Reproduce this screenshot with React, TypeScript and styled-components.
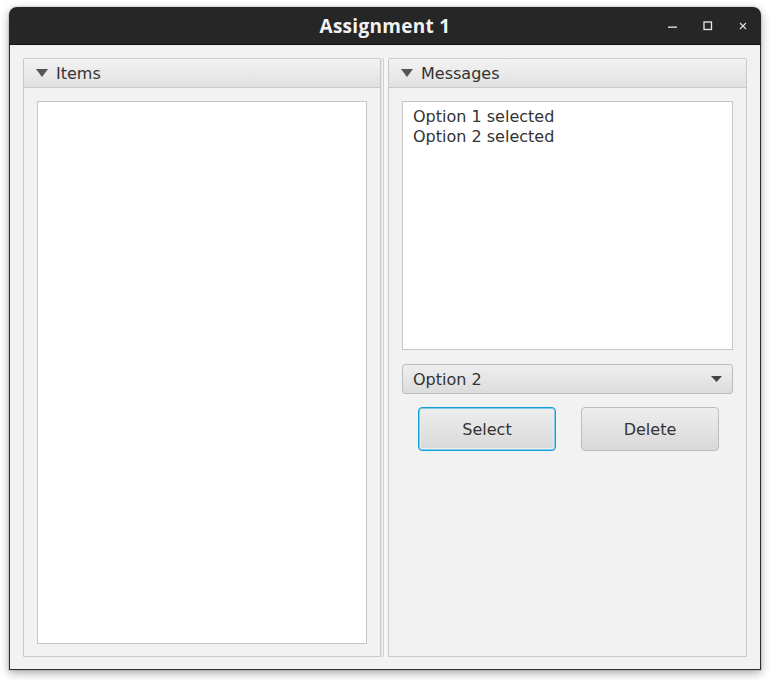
import React from "react";
import styled, { createGlobalStyle } from "styled-components";

const Global = createGlobalStyle`
  html, body { margin: 0; padding: 0; background: #ffffff; }
  body { font-family: "DejaVu Sans", "Liberation Sans", sans-serif; }
  * { box-sizing: border-box; }
`;

const Page = styled.div`
  width: 770px;
  height: 680px;
  padding: 7px 0 0 9px;
  overflow: hidden;
`;

const Window = styled.div`
  width: 752px;
  height: 663px;
  display: flex;
  flex-direction: column;
  border-radius: 8px 8px 0 0;
  box-shadow: 0 3px 10px rgba(0, 0, 0, 0.35), 0 0 0 1px rgba(0, 0, 0, 0.08);
`;

const TitleBar = styled.div`
  height: 38px;
  background: #262626;
  border-radius: 8px 8px 0 0;
  border-bottom: 1px solid #111;
  display: grid;
  grid-template-columns: 1fr auto 1fr;
  align-items: center;
  color: #eeeeee;
`;

const Title = styled.div`
  grid-column: 2;
  font-family: "Open Sans", "DejaVu Sans", sans-serif;
  font-weight: 700;
  font-size: 19px;
  letter-spacing: 0.3px;
  color: #f2f2f2;
  padding-top: 1px;
`;

const Controls = styled.div`
  grid-column: 3;
  justify-self: end;
  display: flex;
  align-items: center;
  padding-right: 1px;
`;

const Ctrl = styled.div`
  width: 35px;
  height: 20px;
  display: flex;
  align-items: center;
  justify-content: center;
`;

const Body = styled.div`
  flex: 1;
  background: #f2f2f2;
  border: 1px solid #2e2e2e;
  border-top: none;
  padding: 13px 13px 12px 13px;
  display: flex;
`;

const Pane = styled.div<{ $w: number }>`
  width: ${(p) => p.$w}px;
  display: flex;
  flex-direction: column;
  border: 1px solid #c9c9c9;
  border-radius: 2px 2px 0 0;
  background: #f2f2f2;
`;

const PaneHeader = styled.div`
  height: 29px;
  display: flex;
  align-items: center;
  gap: 8px;
  padding-left: 12px;
  background: linear-gradient(#f3f3f3, #e1e1e1);
  border-bottom: 1px solid #c9c9c9;
  font-size: 16px;
  color: #333333;
`;

const PaneContent = styled.div`
  flex: 1;
  display: flex;
  flex-direction: column;
  padding: 13px 13px 12px 13px;
`;

const Divider = styled.div`
  width: 7px;
  display: flex;
  background: #f6f6f6;
  border-left: 1px solid #e2e2e2;
  &::before {
    content: "";
    width: 1px;
    margin-left: 1px;
    background: #cfcfcf;
  }
`;

const ListBox = styled.div<{ $h?: number }>`
  background: #ffffff;
  border: 1px solid #c6c6c6;
  ${(p) => (p.$h ? `height: ${p.$h}px;` : "flex: 1;")}
  padding: 5px 10px;
  font-size: 16px;
  line-height: 20px;
  color: #333333;
`;

const Combo = styled.div`
  margin-top: 14px;
  height: 30px;
  border: 1px solid #bdbdbd;
  border-radius: 3px;
  background: linear-gradient(#efefef, #dcdcdc);
  display: flex;
  align-items: center;
  justify-content: space-between;
  padding: 0 10px 0 10px;
  font-size: 16px;
  color: #333333;
`;

const ButtonRow = styled.div`
  margin-top: 13px;
  padding-left: 2px;
  display: flex;
  justify-content: center;
  gap: 25px;
`;

const Button = styled.div<{ $focused?: boolean }>`
  width: 138px;
  height: 44px;
  border-radius: 4px;
  display: flex;
  align-items: center;
  justify-content: center;
  font-size: 16px;
  color: #333333;
  background: linear-gradient(#eeeeee, #d9d9d9);
  border: 1px solid ${(p) => (p.$focused ? "#149fd6" : "#bdbdbd")};
  box-shadow: ${(p) =>
    p.$focused ? "inset 0 0 0 1px #7fcaea, inset 0 0 0 2px #ececec" : "none"};
`;

const Tri = ({ w, h, c }: { w: number; h: number; c: string }) => (
  <svg width={w} height={h} viewBox={`0 0 ${w} ${h}`}>
    <polygon points={`0,0 ${w},0 ${w / 2},${h}`} fill={c} />
  </svg>
);

export default function App() {
  return (
    <>
      <Global />
      <Page>
        <Window>
          <TitleBar>
            <Title>Assignment 1</Title>
            <Controls>
              <Ctrl>
                <svg width="10" height="10" viewBox="0 0 10 10">
                  <rect x="0" y="5.5" width="9" height="1.3" fill="#e8e8e8" />
                </svg>
              </Ctrl>
              <Ctrl>
                <svg width="10" height="10" viewBox="0 0 10 10">
                  <rect x="1" y="1" width="7.5" height="7.5" fill="none" stroke="#e8e8e8" strokeWidth="1.3" />
                </svg>
              </Ctrl>
              <Ctrl>
                <svg width="8" height="8" viewBox="0 0 8 8">
                  <path d="M1 1 L7 7 M7 1 L1 7" stroke="#dcdcdc" strokeWidth="1.2" />
                </svg>
              </Ctrl>
            </Controls>
          </TitleBar>
          <Body>
            <Pane $w={358}>
              <PaneHeader>
                <Tri w={12} h={8} c="#555555" />
                Items
              </PaneHeader>
              <PaneContent>
                <ListBox />
              </PaneContent>
            </Pane>
            <Divider />
            <Pane $w={359}>
              <PaneHeader>
                <Tri w={12} h={8} c="#555555" />
                Messages
              </PaneHeader>
              <PaneContent>
                <ListBox $h={249}>
                  <div>Option 1 selected</div>
                  <div>Option 2 selected</div>
                </ListBox>
                <Combo>
                  <span>Option 2</span>
                  <Tri w={11} h={6} c="#444444" />
                </Combo>
                <ButtonRow>
                  <Button $focused>Select</Button>
                  <Button>Delete</Button>
                </ButtonRow>
              </PaneContent>
            </Pane>
          </Body>
        </Window>
      </Page>
    </>
  );
}
